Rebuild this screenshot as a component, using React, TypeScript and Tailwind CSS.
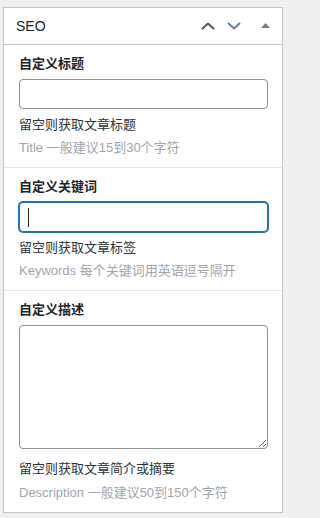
const font = "font-['Liberation_Sans','Noto_Sans_CJK_SC',sans-serif]";

const ChevronUp = () => (
  <svg width="14" height="8" viewBox="0 0 14 8" fill="none" aria-hidden="true">
    <path d="M1 7L7 1.5L13 7" stroke="#50575e" strokeWidth="2" />
  </svg>
);

const ChevronDown = () => (
  <svg width="14" height="8" viewBox="0 0 14 8" fill="none" aria-hidden="true">
    <path d="M1 1L7 6.5L13 1" stroke="#5a7d9b" strokeWidth="2" />
  </svg>
);

const Caret = () => (
  <svg width="9" height="5" viewBox="0 0 9 5" aria-hidden="true">
    <path d="M0 5L4.5 0L9 5Z" fill="#787c82" />
  </svg>
);

type FieldProps = {
  label: string;
  help: string;
  hint: string;
  children: React.ReactNode;
  last?: boolean;
  helpGap?: string;
  hintGap?: string;
};

const Field = ({ label, help, hint, children, last, helpGap = "mt-[6px]", hintGap = "mt-[3px]" }: FieldProps) => (
  <div className={`pl-[15px] pr-[14px] pt-[9px] pb-[9px] ${last ? "" : "border-b border-[#e8e8e9]"}`}>
    <div className="h-5 leading-5 text-[13px] font-semibold text-[#1d2327]">{label}</div>
    <div className="mt-[5px]">{children}</div>
    <p className={`${helpGap} h-5 leading-5 text-[13px] text-[#2c3338]`}>{help}</p>
    <p className={`${hintGap} h-5 leading-5 text-[13px] text-[#a0a5aa]`}>{hint}</p>
  </div>
);

export default function App() {
  return (
    <div className={`min-h-screen bg-[#f0f0f1] pt-[7px] pl-[3px] ${font}`}>
      <div className="w-[280px] bg-white border border-[#c3c4c7]">
        <div className="h-[37px] flex items-center border-b border-[#c3c4c7] pl-[12px]">
          <h2 className="flex-1 text-[14px] text-[#1d2327]">SEO</h2>
          <div className="flex items-center h-full">
            <button className="w-[26px] h-full flex items-center justify-center" aria-label="上移">
              <ChevronUp />
            </button>
            <button className="w-[26px] h-full flex items-center justify-center" aria-label="下移">
              <ChevronDown />
            </button>
            <button className="ml-[2px] w-[33px] h-full flex items-center justify-center pb-[1px]" aria-label="切换面板">
              <Caret />
            </button>
          </div>
        </div>

        <Field label="自定义标题" help="留空则获取文章标题" hint="Title 一般建议15到30个字符">
          <input type="text" className="block w-full h-[30px] rounded-[4px] border border-[#8c8f94] bg-white px-2 text-[14px] outline-none" />
        </Field>

        <Field label="自定义关键词" help="留空则获取文章标签" hint="Keywords 每个关键词用英语逗号隔开">
          <div className="relative">
            <input type="text" className="block w-full h-[30px] rounded-[4px] border border-[#2271b1] shadow-[0_0_0_1px_#2271b1] bg-white px-2 text-[14px] outline-none" />
            <span className="absolute left-[9px] top-[6px] w-px h-[19px] bg-[#1d2327]" />
          </div>
        </Field>

        <Field
          label="自定义描述"
          help="留空则获取文章简介或摘要"
          hint="Description 一般建议50到150个字符"
          helpGap="mt-[10px]"
          hintGap="mt-[4px]"
          last
        >
          <textarea className="block w-full h-[124px] rounded-[4px] border border-[#8c8f94] bg-white px-2 py-1 text-[14px] outline-none" />
        </Field>
      </div>
    </div>
  );
}
